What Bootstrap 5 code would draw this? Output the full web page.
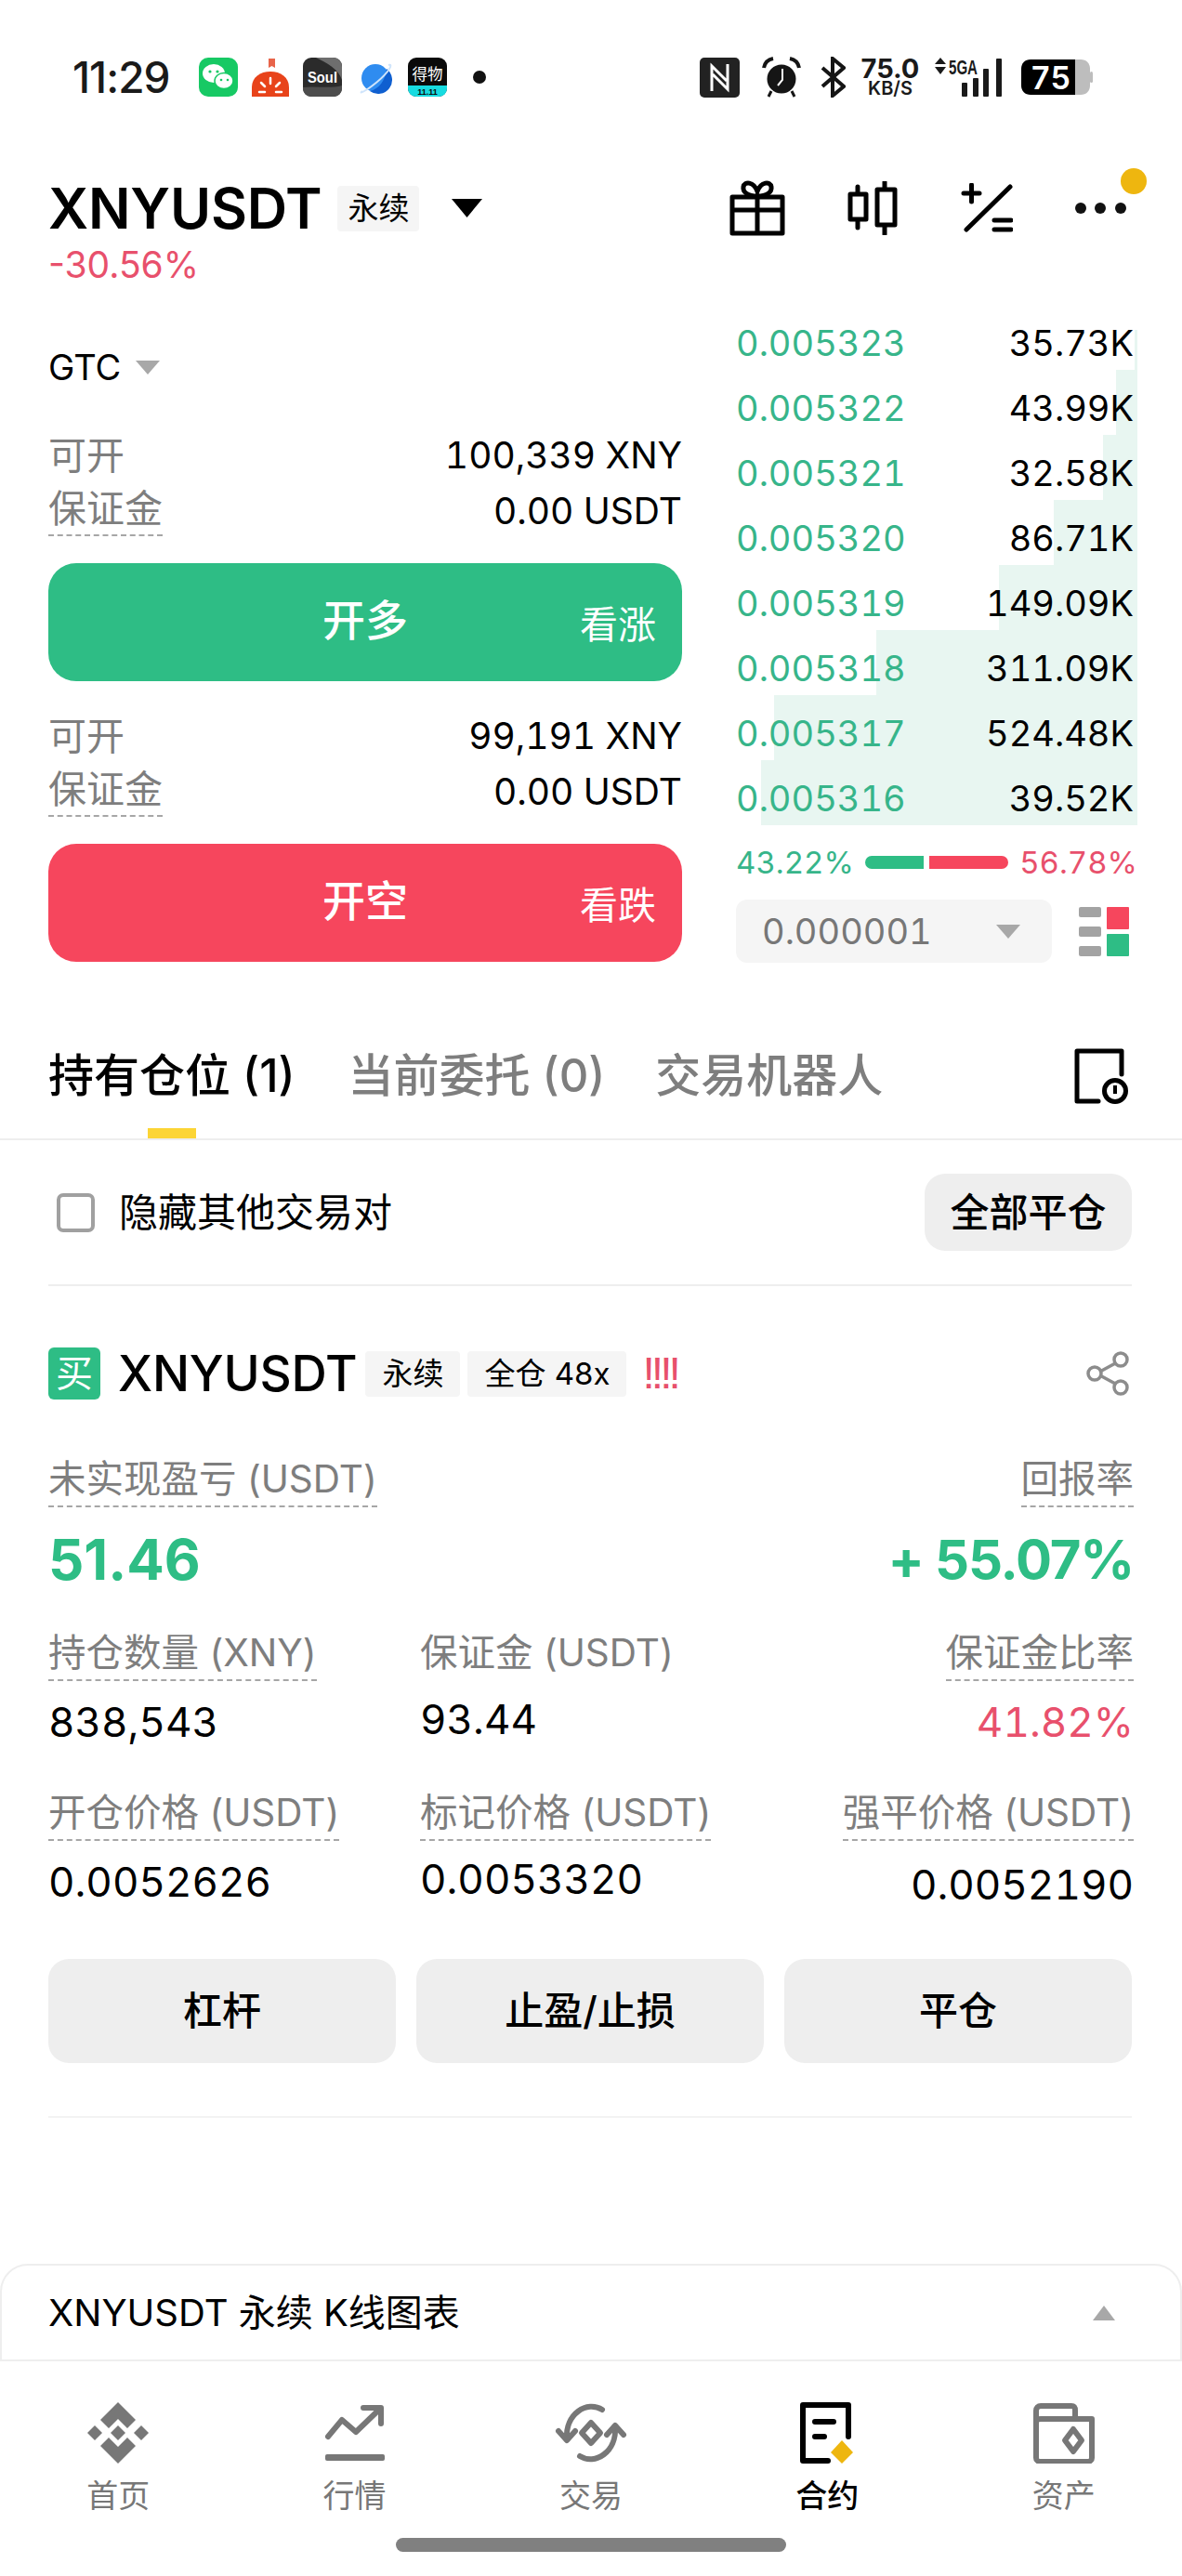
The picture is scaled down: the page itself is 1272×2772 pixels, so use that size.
<!DOCTYPE html>
<html lang="zh-CN">
  <head>
    <meta charset="UTF-8" />
    <meta name="viewport" content="width=device-width, initial-scale=1.0" />
    <title>XNYUSDT 永续</title>
    <link href="https://cdn.jsdelivr.net/npm/bootstrap@5.3.0/dist/css/bootstrap.min.css" rel="stylesheet" />
    <style>
      body {
        width: 1272px;
        height: 2772px;
        overflow: hidden;
        background: #fff;
        color: #000;
        font-family: Inter, "Noto Sans CJK SC", sans-serif;
      }
      svg { display: block; flex: none; }
      .status-strip { height: 166px; padding: 0 96px 0 78px; margin-bottom: 12px; }
      .clock-text { font-size: 46px; font-weight: 500; color: #1a1a1a; letter-spacing: -1px; width: 136px; }
      .net-speed { width: 70px; margin-left: 13px; text-align: center; color: #1a1a1a; white-space: nowrap; }
      .net-speed b { display: block; font-size: 29px; font-weight: 700; line-height: 25px; }
      .net-speed i { display: block; font-style: normal; font-size: 20px; font-weight: 600; line-height: 19px; }
      .head-row { height: 92px; padding: 0 52px; }
      .sym-title { font-size: 60px; font-weight: 600; line-height: 1; letter-spacing: -.2px; }
      .tag-soft { background: #f5f5f5; font-size: 33px; line-height: 49px; padding: 0 18px; border-radius: 4px; white-space: nowrap; }
      .tag-soft.tight { padding: 0 11px; margin-left: 17px; }
      .tool-dot { position: absolute; width: 28px; height: 28px; border-radius: 50%; background: #eeb60f; top: 3px; right: 38px; }
      .change-line { padding-left: 52px; height: 30px; line-height: 30px; font-size: 39px; color: #e8506c; }
      .main-row { padding: 0 48px 0 52px; gap: 58px; }
      .trade-col { width: 682px; }
      .book-col { width: 432px; padding-top: 28px; }
      .tif-line { margin-top: 71px; height: 48px; line-height: 48px; font-size: 38px; gap: 16px; }
      .caret-down { width: 0; height: 0; border-left: 13px solid transparent; border-right: 13px solid transparent; border-top: 15px solid #a8a8a8; }
      .info-line { height: 60px; line-height: 60px; font-size: 39px; font-variant-numeric: tabular-nums; }
      .info-key { color: #7e7e7e; font-size: 41px; }
      .info-key.tip { line-height: 50px; height: 57px; padding-top: 2px; border-bottom: 2px dashed #a6a6a6; }
      .act-btn { position: relative; height: 127px; width: 100%; border: 0; border-radius: 30px; color: #fff; font-size: 46px; font-weight: 500; line-height: 1; padding: 0 0 6px; }
      .act-btn span { position: absolute; right: 28px; top: 46px; font-size: 41px; font-weight: 400; }
      .act-long { background: #2ebd85; margin-top: 26px; margin-bottom: 29px; }
      .act-short { background: #f6465d; margin-top: 26px; }
      .book-line { position: relative; height: 70px; padding: 12px 4px 0 0; line-height: 58px; font-size: 38px; font-variant-numeric: tabular-nums; }
      .book-price { position: relative; color: #37b58a; }
      .book-qty { position: relative; }
      .depth-fill { position: absolute; top: 0; right: 0; bottom: 0; background: #e8f6f1; }
      .ratio-line { margin-top: 15px; height: 50px; line-height: 50px; font-size: 33px; font-variant-numeric: tabular-nums; }
      .ratio-bar { height: 14px; }
      .tick-pick { width: 340px; height: 68px; background: #f5f5f5; border-radius: 12px; padding: 0 34px 0 28px; color: #777; font-size: 38px; font-variant-numeric: tabular-nums; }
      .tab-row { margin-top: 80px; padding: 0 52px; border-bottom: 2px solid #eee; gap: 54px; }
      .tab-item { font-size: 49px; font-weight: 500; line-height: 84px; color: #7e7e7e; white-space: nowrap; }
      .tab-item.on { color: #000; margin-right: 3px; }
      .tab-mark { width: 52px; height: 11px; background: #fcd535; margin-top: 14px; }
      .filter-row { padding: 36px 54px 36px 61px; font-size: 42px; }
      .box-mark { width: 41px; height: 42px; border: 4px solid #a0a0a0; border-radius: 7px; margin-right: 26px; }
      .grey-btn { background: #eee; border: 0; color: #000; font-weight: 500; font-size: 42px; line-height: 1; border-radius: 22px; }
      .rule-line { margin: 0 54px 0 52px; height: 2px; background: #eee; }
      .pos-head { margin-top: 66px; height: 56px; padding: 0 56px 0 52px; }
      .buy-mark { width: 56px; height: 56px; background: #2ebd85; color: #fff; border-radius: 6px; font-size: 40px; line-height: 56px; text-align: center; margin-right: 19px; }
      .pos-sym { font-size: 53px; font-weight: 500; line-height: 1; margin-right: 9px; letter-spacing: -.2px; }
      .warn-marks { color: #e8506c; font-size: 48px; line-height: 1; font-family: "Liberation Sans", sans-serif; margin-left: 17px; letter-spacing: -4px; }
      .pos-grid { margin-top: 61px; padding: 0 52px; display: grid; grid-template-columns: 400px 1fr auto; }
      .stat-key { display: inline-block; color: #7e7e7e; font-size: 40.500px; line-height: 50px; padding-bottom: 3px; border-bottom: 2px dashed #a6a6a6; white-space: nowrap; }
      .stat-big { grid-column: span 2; margin-top: 23px; line-height: 66px; font-size: 60px; font-weight: 700; color: #2ebd85; }
      .stat-big.roi { grid-column: auto; font-size: 58px; letter-spacing: -1.2px; }
      .stat-val { margin-top: 19px; line-height: 50px; font-size: 44px; margin-bottom: 48px; font-variant-numeric: tabular-nums; }
      .stat-val.up { transform: translateY(-3px); }
      .stat-val.down { transform: translateY(3px); }
      .stat-gap { margin-top: 43px; }
      .pos-btns { padding: 0 54px 0 52px; gap: 22px; margin-top: 10px; }
      .pos-btns .grey-btn { flex: 1; height: 112px; }
      .chart-bar { margin-top: 157px; height: 105px; padding: 0 70px 0 50px; border: 2px solid #eee; border-radius: 30px 30px 0 0; font-size: 40px; }
      .caret-up { width: 0; height: 0; border-left: 12px solid transparent; border-right: 12px solid transparent; border-bottom: 16px solid #a8a8a8; }
      .nav-strip { padding-top: 44px; }
      .nav-cell { width: 20%; height: 120px; color: #777; font-size: 34px; line-height: 1; }
      .nav-cell.on { color: #000; font-weight: 500; }
      .nav-icon { height: 66px; margin-bottom: 18px; }
      .home-pill { width: 420px; height: 15px; border-radius: 8px; background: #808080; margin: 26px auto 0; }
    </style>
  </head>

  <body>
    <div class="status-strip d-flex align-items-center">
      <div class="clock-text">11:29</div>
      <svg width="42" height="42" viewBox="0 0 42 42"><rect width="42" height="42" rx="10" fill="#17c964"/><ellipse cx="16" cy="17" rx="12" ry="10" fill="#fff"/><ellipse cx="27" cy="25" rx="10" ry="8.5" fill="#fff" stroke="#17c964" stroke-width="1.5"/><circle cx="12" cy="15" r="1.6" fill="#17c964"/><circle cx="20" cy="15" r="1.6" fill="#17c964"/><circle cx="24" cy="24" r="1.3" fill="#17c964"/><circle cx="31" cy="24" r="1.3" fill="#17c964"/></svg>
      <svg width="42" height="42" viewBox="0 0 42 42" style="margin-left:14px"><path d="M1 42V32C1 21 10 15 21 15S41 21 41 32V42Z" fill="#e8431a"/><path d="M19 1h7v10l-3.500-2-3.500 2Z" fill="#e8644a"/><path d="M21 22v6M11 27l4 4M31 27l-4 4M9 37h6M27 37h6" stroke="#fff" stroke-width="2.500" stroke-linecap="round"/></svg>
      <svg width="42" height="42" viewBox="0 0 42 42" style="margin-left:14px"><rect width="42" height="42" rx="9" fill="#2b2b2b"/><path d="M14 0C26 6 38 12 42 24V10C42 4 38 0 32 0Z" fill="#6e6e6e"/><path d="M0 32C14 30 28 34 42 30V33C42 38 38 42 33 42H9C4 42 0 38 0 33Z" fill="#4d4d4d"/><text x="5" y="27" font-family="Liberation Sans" font-size="17" font-weight="700" fill="#fff" textLength="32" lengthAdjust="spacingAndGlyphs">Soul</text></svg>
      <svg width="42" height="42" viewBox="0 0 42 42" style="margin-left:16px"><circle cx="20" cy="22" r="15" fill="#2f8cf0"/><path d="M32 12A15 15 0 0 1 14 36C24 34 31 24 32 12Z" fill="#0f5fd0"/><path d="M6 36C1 40 10 36 22 26S40 6 34 8" fill="none" stroke="#cfe4fb" stroke-width="2"/></svg>
      <svg width="42" height="42" viewBox="0 0 42 42" style="margin-left:13px"><rect width="42" height="42" rx="9" fill="#0a0a0a"/><path d="M0 30H42V33C42 38 38 42 33 42H9C4 42 0 38 0 33Z" fill="#17dbe0"/><text x="21" y="24" text-anchor="middle" font-family="Noto Sans CJK SC" font-size="17" fill="#fff" textLength="33" lengthAdjust="spacingAndGlyphs">得物</text><text x="21" y="40" text-anchor="middle" font-family="Liberation Sans" font-size="9" font-weight="700" fill="#0a0a0a">11.11</text></svg>
      <svg width="14" height="14" viewBox="0 0 14 14" style="margin-left:28px"><circle cx="7" cy="7" r="7" fill="#111"/></svg>

      <div class="ms-auto d-flex align-items-center">
        <svg width="43" height="43" viewBox="0 0 43 43"><rect width="43" height="43" rx="5" fill="#222"/><path d="M13 36V9L29 25M30 7V34L14 18" fill="none" stroke="#fff" stroke-width="3"/></svg>
        <svg width="44" height="44" viewBox="0 0 44 44" style="margin-left:23px"><circle cx="22" cy="24" r="15.500" fill="#151515"/><path d="M23 13V25L18 31" fill="none" stroke="#fff" stroke-width="2"/><path d="M3 12C4 6 8 3 13 2M41 12C40 6 36 3 31 2" fill="none" stroke="#151515" stroke-width="4"/><path d="M11 37L8 43M33 37L36 43" stroke="#151515" stroke-width="3"/></svg>
        <svg width="27" height="44" viewBox="0 0 27 44" style="margin-left:20px"><path d="M2 12L25 32L13 42V2L25 12L2 32" fill="none" stroke="#151515" stroke-width="4"/></svg>
        <div class="net-speed"><b>75.0</b><i>KB/S</i></div>
        <svg width="73" height="44" viewBox="0 0 73 44" style="margin-left:12px"><path d="M7 1L13 8H1ZM7 19L13 11H1Z" fill="#1a1a1a"/><text x="16" y="19" font-family="Liberation Sans" font-size="22" font-weight="700" fill="#1a1a1a" textLength="31" lengthAdjust="spacingAndGlyphs">5GA</text><rect x="30" y="28" width="6" height="15" rx="1" fill="#1a1a1a"/><rect x="42" y="23" width="6" height="20" rx="1" fill="#1a1a1a"/><rect x="53" y="13" width="6" height="30" rx="1" fill="#1a1a1a"/><rect x="67" y="2" width="6" height="41" rx="1" fill="#1a1a1a"/></svg>
        <svg width="77" height="40" viewBox="0 0 77 40" style="margin-left:21px"><path d="M58 1H64C70 1 74 5 74 11V29C74 35 70 39 64 39H58Z" fill="#bdbdbd"/><rect x="74" y="14" width="3" height="12" rx="1.500" fill="#bdbdbd"/><path d="M10 1H58V39H10C4 39 0 35 0 29V11C0 5 4 1 10 1Z" fill="#000"/><text x="32" y="33" text-anchor="middle" font-family="Inter" font-size="34" font-weight="600" fill="#fff" textLength="42">75</text></svg>
      </div>
    </div>

    <div class="head-row d-flex align-items-center position-relative">
      <div class="sym-title">XNYUSDT</div>
      <div class="tag-soft tight">永续</div>
      <svg width="33" height="20" viewBox="0 0 33 20" style="margin-left:35px"><path d="M0 0H33L16.500 20Z" fill="#000"/></svg>
      <div class="ms-auto d-flex align-items-center" style="margin-right:8px">
        <svg width="62" height="60" viewBox="0 0 62 60"><path d="M4 18H58V57H4ZM4 32H58M31 18V57" fill="none" stroke="#000" stroke-width="5" stroke-linejoin="round"/><path d="M31 17C21 17 15 13 16 7S27 1 31 12C35 1 45 1 46 7S41 17 31 17Z" fill="none" stroke="#000" stroke-width="5"/></svg>
        <svg width="55" height="58" viewBox="0 0 55 58" style="margin-left:65px"><path d="M12 6V50M41 1V57" stroke="#000" stroke-width="5" stroke-linecap="round"/><path d="M4 14H21V41H4ZM33 9H52V47H33Z" fill="#fff" stroke="#000" stroke-width="5" stroke-linejoin="round"/></svg>
        <svg width="56" height="54" viewBox="0 0 56 54" style="margin-left:68px"><path d="M3 11H20M11.500 2V20M6 50L53 4M36 40H54M36 50H54" fill="none" stroke="#000" stroke-width="5" stroke-linecap="round"/></svg>
        <svg width="56" height="14" viewBox="0 0 56 14" style="margin-left:66px"><circle cx="7" cy="7" r="6" fill="#111"/><circle cx="28" cy="7" r="6" fill="#111"/><circle cx="50" cy="7" r="6" fill="#111"/></svg>
      </div>
      <div class="tool-dot"></div>
    </div>
    <div class="change-line">-30.56%</div>

    <div class="main-row d-flex">
      <div class="trade-col">
        <div class="tif-line d-flex align-items-center">GTC <span class="caret-down"></span></div>
        <div style="margin-top:41px">
          <div class="info-line d-flex justify-content-between"><span class="info-key">可开</span><span>100,339 XNY</span></div>
          <div class="info-line d-flex justify-content-between"><span class="info-key tip">保证金</span><span>0.00 USDT</span></div>
        </div>
        <button class="btn act-btn act-long" type="button">开多<span>看涨</span></button>
        <div class="info-line d-flex justify-content-between"><span class="info-key">可开</span><span>99,191 XNY</span></div>
        <div class="info-line d-flex justify-content-between"><span class="info-key tip">保证金</span><span>0.00 USDT</span></div>
        <button class="btn act-btn act-short" type="button">开空<span>看跌</span></button>
      </div>

      <div class="book-col">
        <div id="book"></div>
        <div class="ratio-line d-flex align-items-center">
          <span class="book-price">43.22%</span>
          <span class="ratio-bar" style="margin-left:12px;width:63px;background:#2ebd85;border-radius:7px 0 0 7px"></span>
          <span class="ratio-bar" style="margin-left:6px;width:85px;background:#f6465d;border-radius:0 7px 7px 0"></span>
          <span class="ms-auto" style="color:#e8506c">56.78%</span>
        </div>
        <div class="d-flex align-items-center" style="margin-top:15px">
          <div class="tick-pick d-flex align-items-center justify-content-between">0.000001 <span class="caret-down"></span></div>
          <svg class="ms-auto" style="margin-right:9px" width="54" height="53" viewBox="0 0 54 53"><rect y="0" width="24" height="11" rx="2" fill="#a3a3a3"/><rect y="21" width="24" height="11" rx="2" fill="#a3a3a3"/><rect y="42" width="24" height="11" rx="2" fill="#a3a3a3"/><rect x="30" width="24" height="24" rx="1" fill="#f6465d"/><rect x="30" y="29" width="24" height="24" rx="1" fill="#2ebd85"/></svg>
        </div>
      </div>
    </div>

    <div class="tab-row d-flex">
      <div class="tab-item on d-flex flex-column align-items-center">持有仓位 (1)<div class="tab-mark"></div></div>
      <div class="tab-item">当前委托 (0)</div>
      <div class="tab-item">交易机器人</div>
      <svg class="ms-auto" style="margin:12px 6px 0 0" width="58" height="60" viewBox="0 0 58 60"><path d="M51 28V3H3V57H26" fill="none" stroke="#000" stroke-width="5" stroke-linejoin="round" stroke-linecap="round"/><circle cx="44" cy="46" r="11.500" fill="#fff" stroke="#000" stroke-width="5"/><path d="M44 40V49" stroke="#000" stroke-width="4"/></svg>
    </div>

    <div class="filter-row d-flex align-items-center">
      <span class="box-mark"></span>隐藏其他交易对
      <button class="btn grey-btn ms-auto" style="width:223px;height:83px" type="button">全部平仓</button>
    </div>
    <div class="rule-line"></div>

    <div class="pos-head d-flex align-items-center">
      <div class="buy-mark">买</div>
      <div class="pos-sym">XNYUSDT</div>
      <div class="tag-soft">永续</div>
      <div class="tag-soft" style="margin-left:8px">全仓 48x</div>
      <div class="warn-marks">!!!!</div>
      <svg class="ms-auto" width="48" height="48" viewBox="0 0 48 48"><path d="M36 11L12 24L36 37" fill="none" stroke="#8c8c8c" stroke-width="3.500"/><circle cx="38" cy="9" r="7" fill="#fff" stroke="#8c8c8c" stroke-width="3.500"/><circle cx="10" cy="24" r="7" fill="#fff" stroke="#8c8c8c" stroke-width="3.500"/><circle cx="38" cy="39" r="7" fill="#fff" stroke="#8c8c8c" stroke-width="3.500"/></svg>
    </div>

    <div class="pos-grid">
      <div><span class="stat-key">未实现盈亏 (USDT)</span></div>
      <div></div>
      <div class="text-end"><span class="stat-key">回报率</span></div>

      <div class="stat-big">51.46</div>
      <div class="stat-big roi text-end">+ 55.07%</div>

      <div class="stat-gap"><span class="stat-key">持仓数量 (XNY)</span></div>
      <div class="stat-gap"><span class="stat-key" style="border-color:transparent">保证金 (USDT)</span></div>
      <div class="stat-gap text-end"><span class="stat-key">保证金比率</span></div>

      <div class="stat-val">838,543</div>
      <div class="stat-val up">93.44</div>
      <div class="stat-val text-end" style="color:#e8506c">41.82%</div>

      <div><span class="stat-key">开仓价格 (USDT)</span></div>
      <div><span class="stat-key">标记价格 (USDT)</span></div>
      <div class="text-end"><span class="stat-key">强平价格 (USDT)</span></div>

      <div class="stat-val">0.0052626</div>
      <div class="stat-val up">0.0053320</div>
      <div class="stat-val down text-end">0.0052190</div>
    </div>

    <div class="pos-btns d-flex">
      <button class="btn grey-btn" type="button">杠杆</button>
      <button class="btn grey-btn" type="button">止盈/止损</button>
      <button class="btn grey-btn" type="button">平仓</button>
    </div>
    <div class="rule-line" style="margin-top:57px;background:#f3f3f3"></div>

    <div class="chart-bar d-flex align-items-center justify-content-between">
      XNYUSDT 永续 K线图表
      <span class="caret-up"></span>
    </div>

    <div class="nav-strip d-flex">
      <div class="nav-cell d-flex flex-column align-items-center">
        <svg class="nav-icon" width="66" height="66" viewBox="0 0 66 66" fill="#777"><path d="M33 0L52 19L43 28L33 18L23 28L14 19ZM33 66L52 47L43 38L33 48L23 38L14 47ZM8 25L16 33L8 41L0 33ZM58 25L66 33L58 41L50 33ZM33 25L41 33L33 41L25 33Z"/></svg>
        首页
      </div>
      <div class="nav-cell d-flex flex-column align-items-center">
        <svg class="nav-icon" width="66" height="66" viewBox="0 0 66 66"><path d="M4 37L19 19L34 32L60 7M42 6H61V23" fill="none" stroke="#777" stroke-width="6" stroke-linecap="round" stroke-linejoin="round"/><rect x="1" y="56" width="64" height="7" rx="2" fill="#777"/></svg>
        行情
      </div>
      <div class="nav-cell d-flex flex-column align-items-center">
        <svg class="nav-icon" width="80" height="66" viewBox="0 0 80 66"><path d="M52 8C36 -2 12 12 14 40M28 58C44 68 68 54 66 26" fill="none" stroke="#777" stroke-width="6" stroke-linecap="round"/><path d="M5 31L14 41L23 31M57 35L66 25L75 35" fill="none" stroke="#777" stroke-width="6" stroke-linecap="round" stroke-linejoin="round"/><path d="M40 22L50 33L40 44L30 33Z" fill="none" stroke="#777" stroke-width="6" stroke-linejoin="round"/></svg>
        交易
      </div>
      <div class="nav-cell on d-flex flex-column align-items-center">
        <svg class="nav-icon" width="58" height="66" viewBox="0 0 58 66"><path d="M52 37V3H3V63H30" fill="none" stroke="#000" stroke-width="6" stroke-linecap="round" stroke-linejoin="round"/><path d="M16 21H36M16 37H26" stroke="#000" stroke-width="6" stroke-linecap="round"/><path d="M45 41L57 54L45 66L33 54Z" fill="#eeb60f"/></svg>
        合约
      </div>
      <div class="nav-cell d-flex flex-column align-items-center">
        <svg class="nav-icon" width="66" height="66" viewBox="0 0 66 66"><path d="M3 20V9C3 6 5 4 8 4H41C44 4 45 6 45 9V18M3 20V60C3 62 5 64 7 64H59C61 64 63 62 63 60V18H8C5 18 3 19 3 20Z" fill="none" stroke="#777" stroke-width="6" stroke-linejoin="round"/><path d="M43 29L52 41L43 53L34 41Z" fill="none" stroke="#777" stroke-width="6" stroke-linejoin="round"/></svg>
        资产
      </div>
    </div>
    <div class="home-pill"></div>

    <script>
      const levels = [
        ["0.005323", "35.73K", 3, 27],
        ["0.005322", "43.99K", 23, 0],
        ["0.005321", "32.58K", 37, 0],
        ["0.005320", "86.71K", 90, 0],
        ["0.005319", "149.09K", 149, 0],
        ["0.005318", "311.09K", 281, 0],
        ["0.005317", "524.48K", 391, 0],
        ["0.005316", "39.52K", 405, 0]
      ];
      const book = document.getElementById("book");
      for (const [price, qty, width, top] of levels) {
        const row = document.createElement("div");
        row.className = "book-line d-flex justify-content-between";
        row.innerHTML =
          '<div class="depth-fill" style="width:' + width + 'px;top:' + top + 'px"></div>' +
          '<span class="book-price">' + price + "</span>" +
          '<span class="book-qty">' + qty + "</span>";
        book.appendChild(row);
      }
    </script>
    <script src="https://cdn.jsdelivr.net/npm/bootstrap@5.3.0/dist/js/bootstrap.bundle.min.js"></script>
  </body>
</html>
